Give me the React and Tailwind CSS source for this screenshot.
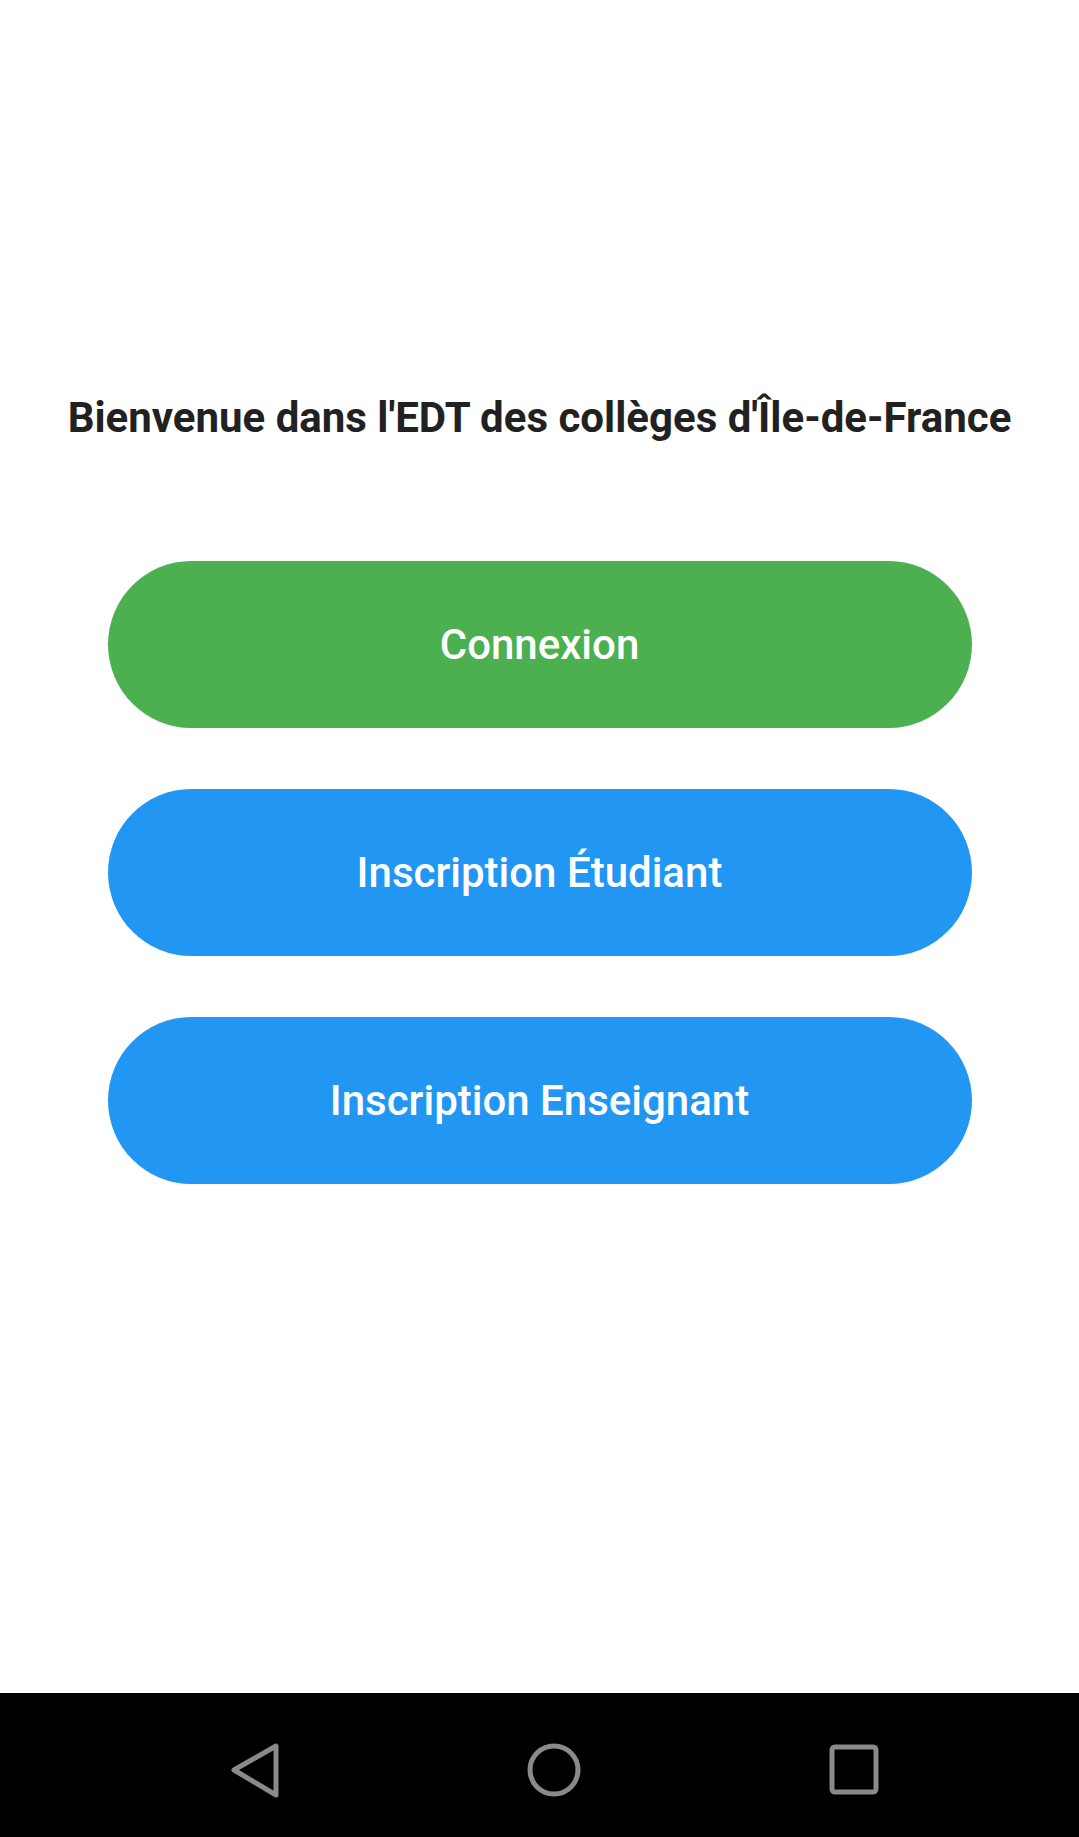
import React from 'react';

const buttons = [
  { label: 'Connexion', color: 'bg-[#4caf50]' },
  { label: 'Inscription Étudiant', color: 'bg-[#2196f3]' },
  { label: 'Inscription Enseignant', color: 'bg-[#2196f3]' },
];

const App = () => {
  return (
    <div className="w-[1079px] h-[1837px] flex flex-col bg-white font-['Roboto',sans-serif]">
      <div className="flex-1 flex flex-col items-center pt-[393px]">
        <h1 className="text-[42px] leading-[50px] font-bold text-[#212121]">
          Bienvenue dans l'EDT des collèges d'Île-de-France
        </h1>
        <div className="mt-[118px] flex flex-col gap-[61px] w-[864px]">
          {buttons.map((b) => (
            <button
              key={b.label}
              className={`${b.color} h-[167px] rounded-full text-white text-[42px] font-medium`}
            >
              {b.label}
            </button>
          ))}
        </div>
      </div>

      <div className="h-[144px] bg-black flex items-center pt-[10px] pl-[227px] gap-[246px]">
        <svg width="54" height="56" viewBox="0 0 54 56">
          <path d="M49 4 L49 53 L7 28 Z" fill="none" stroke="#8a8a8a" strokeWidth="5" strokeLinejoin="round" />
        </svg>
        <svg width="54" height="56" viewBox="0 0 54 56">
          <circle cx="27" cy="28" r="24" fill="none" stroke="#8a8a8a" strokeWidth="5" />
        </svg>
        <svg width="54" height="56" viewBox="0 0 54 56">
          <rect x="5" y="5" width="44" height="45" rx="3" fill="none" stroke="#8a8a8a" strokeWidth="5" />
        </svg>
      </div>
    </div>
  );
};

export default App;
